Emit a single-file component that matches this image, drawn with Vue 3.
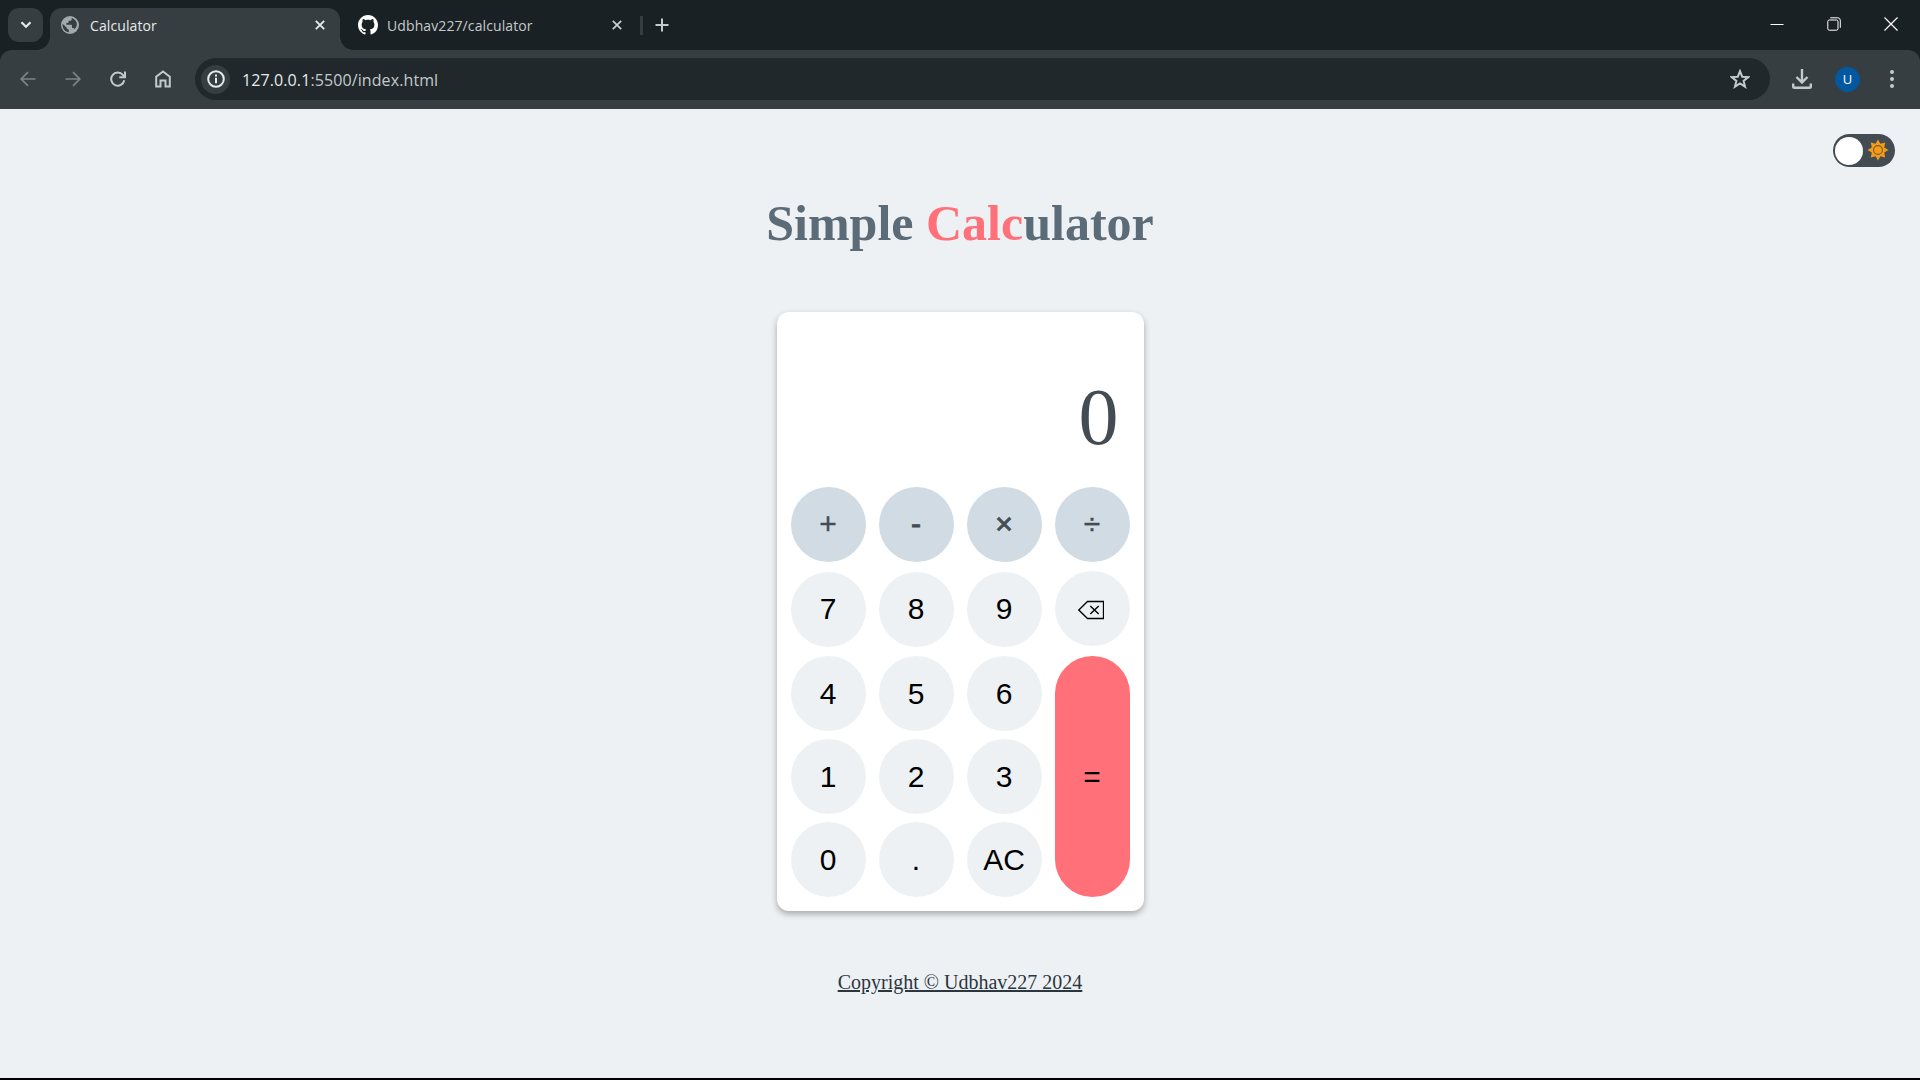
<script setup>
const keys = [
  { label: '+', type: 'op' },
  { label: '-', type: 'op minus' },
  { label: '×', type: 'op times' },
  { label: '÷', type: 'op' },
  { label: '7', type: 'upper' },
  { label: '8', type: 'upper' },
  { label: '9', type: 'upper' },
  { label: 'back', type: 'back' },
  { label: '4' },
  { label: '5' },
  { label: '6' },
  { label: '=', type: 'equals' },
  { label: '1' },
  { label: '2' },
  { label: '3' },
  { label: '0' },
  { label: '.' },
  { label: 'AC' },
]
</script>

<template>
  <div class="browser">
    <header class="tabs">
      <button class="search-tabs">
        <svg width="12" height="8" viewBox="0 0 12 8"><path d="M1.500 1.300 6 5.800l4.500-4.500" fill="none" stroke="#e6eaeb" stroke-width="2.200" /></svg>
      </button>
      <div class="tab active">
        <svg class="globe" width="18" height="18" viewBox="0 0 18 18">
          <circle cx="9" cy="9" r="9" fill="#a3a9ac" />
          <path d="M1.600 7.700 5.600 11.500v1.100l2.200 1.200v2.500C4.200 16 1.600 13 1.600 9zM10.700 1.900v1.300c0 .9-.7 1.600-1.600 1.600H7.600v1.500c0 .5-.4.8-.8.8H5.300v1.700h4.800c.5 0 .9.4.9.9v2.300h.8c.8 0 1.400.5 1.600 1.200C17.800 9.300 16 3.700 10.700 1.900z" fill="#363e41" />
        </svg>
        <span class="tab-title">Calculator</span>
        <svg class="close" width="10" height="10" viewBox="0 0 10 10"><path d="m.8.8 8.400 8.400M9.200.8.8 9.200" stroke="#e6eaeb" stroke-width="1.900" /></svg>
      </div>
      <div class="tab inactive">
        <svg class="github" width="20" height="20" viewBox="0 0 16 16"><path fill="#fff" d="M8 0C3.580 0 0 3.580 0 8c0 3.540 2.290 6.530 5.470 7.590.4.070.55-.17.55-.38 0-.19-.01-.82-.01-1.490-2.010.37-2.530-.49-2.690-.94-.09-.23-.48-.94-.82-1.130-.28-.15-.68-.52-.01-.53.63-.01 1.080.58 1.230.82.72 1.210 1.870.87 2.330.66.070-.52.28-.87.51-1.070-1.780-.2-3.640-.89-3.640-3.950 0-.87.31-1.590.82-2.150-.08-.2-.36-1.020.08-2.120 0 0 .67-.21 2.200.82.64-.18 1.320-.27 2-.27s1.360.09 2 .27c1.530-1.040 2.200-.82 2.200-.82.44 1.100.16 1.920.08 2.120.51.56.82 1.270.82 2.150 0 3.070-1.870 3.750-3.650 3.950.29.25.54.73.54 1.480 0 1.070-.01 1.930-.01 2.200 0 .21.15.46.55.38A8.010 8.010 0 0 0 16 8c0-4.420-3.580-8-8-8z" /></svg>
        <span class="tab-title repo">Udbhav227/calculator</span>
        <svg class="close" width="10" height="10" viewBox="0 0 10 10"><path d="m.8.8 8.400 8.400M9.200.8.8 9.200" stroke="#cbd0d2" stroke-width="1.700" /></svg>
      </div>
      <i class="divider"></i>
      <svg class="plus" width="14" height="14" viewBox="0 0 14 14"><path d="M7 .5v13M.5 7h13" stroke="#c4cacc" stroke-width="2" /></svg>
      <div class="window-controls">
        <svg width="14" height="14" viewBox="0 0 14 14"><path d="M.5 7.500h13" stroke="#fff" /></svg>
        <svg width="14" height="14" viewBox="0 0 14 14" fill="none" stroke="#fff"><rect x=".8" y="3" width="10.200" height="10.200" rx="1.500" /><path d="M3.200.8h7.600a2.500 2.500 0 0 1 2.500 2.500v7.500" /></svg>
        <svg width="14" height="14" viewBox="0 0 14 14"><path d="m.5.5 13 13m0-13-13 13" stroke="#fff" stroke-width="1.200" /></svg>
      </div>
    </header>

    <nav class="toolbar">
      <div class="nav-icons">
        <svg width="16" height="16" viewBox="0 0 16 16" fill="none" stroke="#7d8487" stroke-width="1.700"><path d="M15.500 8H1.500M8 1.200 1.200 8 8 14.800" /></svg>
        <svg width="16" height="16" viewBox="0 0 16 16" fill="none" stroke="#7d8487" stroke-width="1.700"><path d="M.5 8h14M8 1.200 14.800 8 8 14.800" /></svg>
        <svg width="16" height="16" viewBox="0 0 16 16" fill="none" stroke="#c4cacc" stroke-width="2"><path d="M14.300 9.300A6.600 6.600 0 1 1 12.900 3.800L14.800 6M15 .5v5.800H9.300" /></svg>
        <svg width="16" height="18" viewBox="0 0 16 18" fill="none" stroke="#c4cacc" stroke-width="2"><path d="M1.200 16.600V6.800L8 1.500l6.800 5.300v9.800h-4.300v-6h-5v6z" /></svg>
      </div>
      <div class="omnibox">
        <span class="site-info">
          <svg width="18" height="18" viewBox="0 0 18 18"><circle cx="9" cy="9" r="7.800" fill="none" stroke="#e6eaeb" stroke-width="2" /><path d="M9 7.800v5.400M9 4.600v2" stroke="#e6eaeb" stroke-width="2" /></svg>
        </span>
        <span class="url"><b>127.0.0.1</b>:5500/index.html</span>
        <svg class="star" width="20" height="20" viewBox="0 0 20 20"><path d="m10 2.200 2.200 5.500 6 .4-4.600 3.800 1.500 5.800L10 14.500l-5.100 3.200 1.500-5.800L1.800 8.100l6-.4z" fill="none" stroke="#c4cacc" stroke-width="2" /></svg>
      </div>
      <svg class="download" width="20" height="20" viewBox="0 0 20 20" fill="none" stroke="#c4cacc" stroke-width="2.400"><path d="M10 0v13M4.500 8l5.500 5.500L15.500 8M1.200 14.500v3q0 1.300 1.300 1.300h15q1.300 0 1.300-1.300v-3" /></svg>
      <span class="avatar">U</span>
      <svg class="menu" width="4" height="18" viewBox="0 0 4 18" fill="#c4cacc"><circle cx="2" cy="2" r="2" /><circle cx="2" cy="9" r="2" /><circle cx="2" cy="16" r="2" /></svg>
    </nav>

    <main class="page">
      <div class="theme-row">
        <div class="toggle">
          <span class="knob"></span>
          <svg width="22" height="22" viewBox="-11 -11 22 22">
            <path d="M0-10.500 2.400-6.200 7.200-7.400 6.200-2.400 10.500 0 6.200 2.400 7.200 7.400 2.400 6.200 0 10.500-2.400 6.200-7.200 7.400-6.200 2.400-10.500 0-6.200-2.400-7.200-7.400-2.400-6.200z" fill="#f39c1c" />
            <circle r="4.400" fill="#f39c1c" stroke="#805b24" stroke-width="1.100" />
          </svg>
        </div>
      </div>
      <h1>Simple <span>Calc</span>ulator</h1>
      <section class="calculator">
        <div class="display">0</div>
        <div class="keys">
          <button v-for="key in keys" :key="key.label" :class="['key', key.type]">
            <svg v-if="key.type === 'back'" width="26" height="20" viewBox="0 0 26 20" fill="none" stroke="#000"><path d="M.8 10 9.500 1.500h16v17h-16z" stroke-width="1.300" /><path d="m12.300 6 8.400 8m0-8-8.400 8" stroke-width="1.400" /></svg>
            <template v-else>{{ key.label }}</template>
          </button>
        </div>
      </section>
      <footer>Copyright © Udbhav227 2024</footer>
    </main>
  </div>
</template>

<style>
body {
  margin: 0;
  overflow: hidden;
}
</style>

<style scoped>
* {
  box-sizing: border-box;
}
.browser {
  width: 1920px;
  height: 1080px;
  display: flex;
  flex-direction: column;
  background: #1a2124;
  border-bottom: 2px solid #000;
  font-family: "Open Sans", "Noto Sans", sans-serif;
}
svg {
  display: block;
  flex: none;
}
button {
  border: 0;
  padding: 0;
}
.tabs {
  height: 50px;
  flex: none;
  display: flex;
  align-items: center;
}
.search-tabs {
  width: 35px;
  height: 34px;
  margin-left: 8px;
  border-radius: 11px;
  background: #363e41;
  display: grid;
  place-items: center;
}
.tab {
  width: 290px;
  height: 42px;
  align-self: flex-end;
  padding: 0 15px 0 18px;
  display: flex;
  align-items: center;
  color: #c4cacc;
}
.tab.inactive {
  padding-right: 8px;
}
.tab.active {
  position: relative;
  margin-left: 7px;
  padding-left: 11px;
  background: #363e41;
  border-radius: 12px 12px 0 0;
  color: #e6eaeb;
}
.tab.active::before,
.tab.active::after {
  content: "";
  position: absolute;
  bottom: 0;
  width: 13px;
  height: 13px;
}
.tab.active::before {
  right: 100%;
  background: radial-gradient(circle at 0 0, transparent 12.500px, #363e41 13px);
}
.tab.active::after {
  left: 100%;
  background: radial-gradient(circle at 100% 0, transparent 12.500px, #363e41 13px);
}
.tab svg {
  margin-bottom: 8px;
}
.tab-title {
  margin: 0 auto 7px 11px;
  font-size: 14px;
  line-height: 20px;
  letter-spacing: 0.1px;
  white-space: nowrap;
}
.tab-title.repo {
  margin-left: 9px;
}
.divider {
  width: 3px;
  height: 19px;
  margin-left: 10px;
  background: #363e41;
}
.plus {
  margin-left: 12px;
}
.window-controls {
  margin: 0 22px 2px auto;
  display: flex;
  gap: 43px;
}
.toolbar {
  height: 59px;
  flex: none;
  display: flex;
  align-items: center;
  padding: 0 26px 1px 20px;
  background: #363e41;
  border-radius: 12px 12px 0 0;
}
.nav-icons {
  display: flex;
  align-items: center;
  gap: 29px;
}
.omnibox {
  width: 1575px;
  height: 42px;
  margin-left: 24px;
  padding: 0 20px 0 6px;
  border-radius: 21px;
  background: #20282b;
  display: flex;
  align-items: center;
}
.site-info {
  width: 29px;
  height: 29px;
  border-radius: 50%;
  background: #363e41;
  display: grid;
  place-items: center;
}
.url {
  margin: 1px auto 0 12px;
  font-size: 16px;
  letter-spacing: 0.1px;
  color: #c4cacc;
  white-space: nowrap;
}
.url b {
  font-weight: 400;
  color: #e6eaeb;
}
.download {
  margin-left: 22px;
}
.avatar {
  width: 25px;
  height: 25px;
  margin-left: 23px;
  border-radius: 50%;
  background: #0258a0;
  color: #fff;
  font-size: 13px;
  line-height: 25px;
  text-align: center;
}
.menu {
  margin-left: auto;
}
.page {
  flex: 1;
  display: flex;
  flex-direction: column;
  align-items: center;
  background: #edf1f4;
  font-family: "Liberation Serif", serif;
}
.theme-row {
  width: 100%;
  padding: 25px 25px 0;
  display: flex;
  justify-content: flex-end;
}
.toggle {
  width: 62px;
  height: 33px;
  padding: 0 6px 0 2px;
  border-radius: 17px;
  background: #444c53;
  display: flex;
  align-items: center;
  justify-content: space-between;
}
.toggle svg {
  margin-bottom: 2px;
}
.knob {
  width: 28px;
  height: 28px;
  border-radius: 50%;
  background: #fff;
}
h1 {
  margin: 27px 0 0;
  font-size: 50px;
  line-height: 58px;
  color: #5c6b78;
}
h1 span {
  color: #ff7078;
}
.calculator {
  width: 367px;
  height: 599px;
  margin-top: 60px;
  padding: 0 14px;
  border-radius: 12px;
  background: #fff;
  box-shadow: 0 3px 6px rgba(0, 0, 0, 0.3);
}
.display {
  height: 175px;
  padding: 59px 11px 0 0;
  font-size: 80px;
  line-height: 92px;
  text-align: right;
  color: #444c53;
}
.keys {
  display: grid;
  grid-template-columns: repeat(4, 75px);
  grid-template-rows: 76px 77px 75px 75px 75px;
  column-gap: 13px;
  row-gap: 8px;
}
.key {
  height: 75px;
  border-radius: 38px;
  background: #edf1f4;
  color: #000;
  font: 30px/35px "Liberation Sans", sans-serif;
}
.key.op {
  padding-bottom: 3px;
  background: #d1dbe3;
  color: #444c53;
  -webkit-text-stroke: 0.4px #444c53;
}
.key.op.times,
.key.op.minus {
  -webkit-text-stroke-width: 0.9px;
}
.key.upper {
  margin-top: 1px;
  padding-bottom: 2px;
}
.key.back {
  padding: 2px 3px 0 0;
  display: grid;
  place-items: center;
}
.key.equals {
  grid-column: 4;
  grid-row: 3 / span 3;
  height: auto;
  background: #ff7078;
}
footer {
  margin-top: 60px;
  font-size: 20px;
  line-height: 23px;
  color: #2c363f;
  text-decoration: underline;
}
</style>
